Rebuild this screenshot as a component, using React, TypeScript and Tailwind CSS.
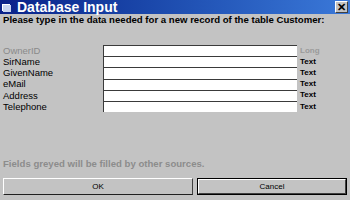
const rows = [
  { label: 'OwnerID', type: 'Long', grey: true },
  { label: 'SirName', type: 'Text' },
  { label: 'GivenName', type: 'Text' },
  { label: 'eMail', type: 'Text' },
  { label: 'Address', type: 'Text' },
  { label: 'Telephone', type: 'Text' },
]

export default function App() {
  return (
    <div className="flex h-[200px] w-[350px] flex-col bg-[#c3c3c3] font-['Liberation_Sans',Arial,sans-serif]">
      {/* title bar */}
      <div className="flex h-[14px] items-center bg-gradient-to-r from-[#0b2189] to-[#3b79d9] pl-[2px] pr-[2px]">
        <svg width="10" height="9" viewBox="0 0 10 9" className="mr-[5px]">
          <rect x="0" y="1" width="8" height="7" fill="#fff" />
          <rect x="1" y="2" width="8" height="7" fill="#c8d4f0" />
        </svg>
        <span className="text-[14px] font-bold leading-none text-white">Database Input</span>
        <div className="ml-auto flex h-[12px] w-[13px] items-center justify-center border border-t-white border-l-white border-r-[#404040] border-b-[#404040] bg-[#c3c3c3]">
          <span className="text-[11px] font-bold leading-none text-black">✕</span>
        </div>
      </div>

      <p className="px-[3px] pt-[1px] text-[9.6px] font-bold leading-[9px] text-black">
        Please type in the data needed for a new record of the table Customer:
      </p>

      <div className="mt-[21px] flex flex-col">
        {rows.map((r) => (
          <div key={r.label} className="flex h-[11.2px] items-center">
            <span
              className={`w-[103px] pl-[3px] text-[9.5px] leading-none ${r.grey ? 'text-[#8a8a8a]' : 'text-black'}`}
            >
              {r.label}
            </span>
            <div className="h-full w-[194px] border-t border-l border-t-[#3a3a3a] border-l-[#3a3a3a] bg-white" />
            <span
              className={`pl-[3px] text-[8px] font-bold leading-none ${r.grey ? 'text-[#9a9a9a]' : 'text-black'}`}
            >
              {r.type}
            </span>
          </div>
        ))}
      </div>

      <p className="mt-auto px-[3px] text-[9.6px] font-bold leading-none text-[#8c8c8c]">
        Fields greyed will be filled by other sources.
      </p>

      <div className="mb-[5px] mt-[9px] flex gap-[4px] px-[3px]">
        <button className="flex h-[17px] w-[190px] items-center justify-center border border-t-white border-l-white border-r-[#404040] border-b-[#202020] bg-[#c3c3c3] text-[8px] text-black">
          OK
        </button>
        <div className="flex h-[17px] flex-1 border border-black">
          <button className="flex flex-1 items-center justify-center border border-t-white border-l-white border-r-[#404040] border-b-[#404040] bg-[#c3c3c3] text-[8px] text-black">
            Cancel
          </button>
        </div>
      </div>
    </div>
  )
}
